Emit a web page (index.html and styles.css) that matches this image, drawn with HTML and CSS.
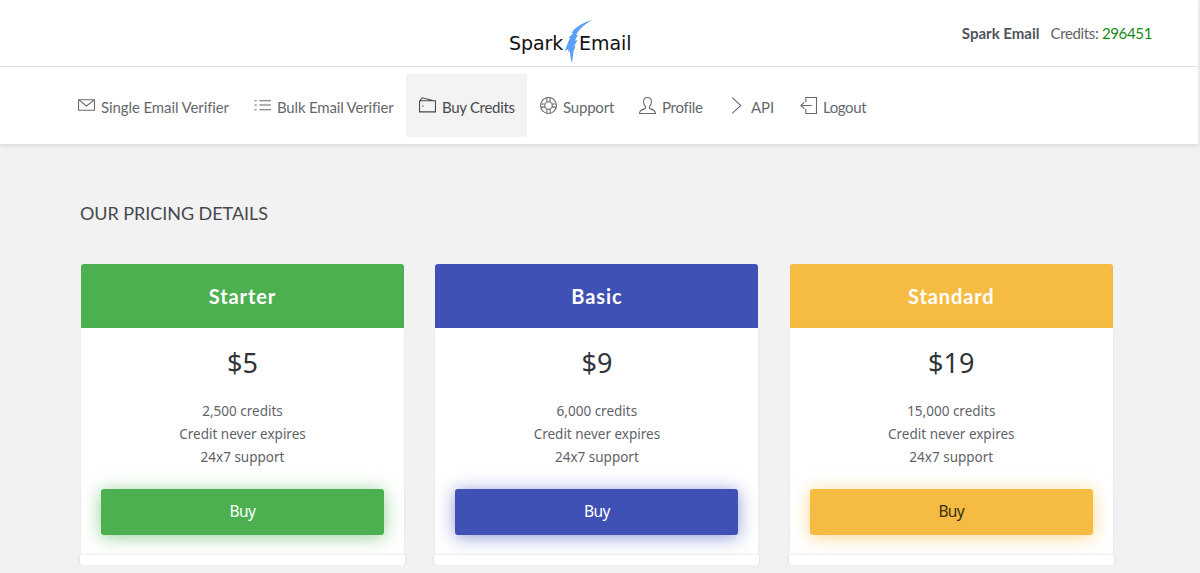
FILE: index.html
```html
<!DOCTYPE html>
<html lang="en">
<head>
<meta charset="UTF-8">
<meta name="viewport" content="width=device-width, initial-scale=1.0">
<title>Spark Email - Buy Credits</title>
<link rel="stylesheet" href="styles.css">
</head>
<body>
    <header class="header">
        <div class="topbar">
            <a class="logo" href="#">
                <span>Spark</span>
                <svg class="bolt" width="28" height="44" viewBox="0 0 28 44"><path fill="#5a9ff8" d="M28 0C19 2.500 11 7 7.500 13l2-.3L4.500 18l1.700 0C4 22 2.500 26 1 31l3.500-2-.5 3 2-1c0 5 .8 8 2 12 .8-5 1-8 1.600-12l2-5-1.600.6 3.500-6.600-2.600.4L14 15l-2 .3C15 9 21 4 28 0z"/></svg>
                <span>Email</span>
            </a>
            <div class="account">
                <b>Spark Email</b>
                <span class="credits">Credits: <span class="amount">296451</span></span>
            </div>
        </div>
        <nav class="menu">
            <a class="item single" href="#">
                <svg class="icon" viewBox="0 0 16 16"><path d="M.5 2.500h15v10H.5zM1 3l7 5.500L15 3"/></svg>
                <span>Single Email Verifier</span>
            </a>
            <a class="item bulk" href="#">
                <svg class="icon" viewBox="0 0 16 16"><path d="M5 3.500h11M5 7.500h11M5 12h11M.5 3.500h2M.5 7.500h2M.5 12h2"/></svg>
                <span>Bulk Email Verifier</span>
            </a>
            <a class="item buy active" href="#">
                <svg class="icon" viewBox="0 0 16 16"><path d="M.5 3.500h15v10.500H.5zM.5 4L3 .8 14 3.500M3 8.500h1.300"/></svg>
                <span>Buy Credits</span>
            </a>
            <a class="item support" href="#">
                <svg class="icon" viewBox="0 0 16 16"><circle cx="8" cy="8" r="7.500"/><circle cx="8" cy="8" r="3.500"/><path d="M6.500.7v4M9.500.7v4M6.500 11.300v4M9.500 11.300v4M.7 6.500h4M.7 9.500h4M11.300 6.500h4M11.300 9.500h4"/></svg>
                <span>Support</span>
            </a>
            <a class="item profile" href="#">
                <svg class="icon" viewBox="0 0 16 16"><path d="M8 .5C5.500.5 4.300 2.300 4.300 4.500c0 2 .6 3.700 1.900 4.800v1.400c-1 1-5.700.8-5.700 4.800h15c0-4-4.700-3.800-5.700-4.800V9.300c1.300-1.100 1.900-2.800 1.900-4.800C11.700 2.300 10.500.5 8 .5z"/></svg>
                <span>Profile</span>
            </a>
            <a class="item api" href="#">
                <svg class="icon" viewBox="0 0 16 16"><path d="M4 .5L12 8l-8 7.500"/></svg>
                <span>API</span>
            </a>
            <a class="item logout" href="#">
                <svg class="icon" viewBox="0 0 16 16"><path d="M5.500 5V.5h10v15h-10V11M11 8H.8M4 5L.8 8 4 11"/></svg>
                <span>Logout</span>
            </a>
        </nav>
    </header>

    <main class="content">
        <h1 class="title">OUR PRICING DETAILS</h1>
        <div class="plans">
            <div class="plan starter">
                <h2 class="plan-name">Starter</h2>
                <div class="plan-body">
                    <div class="price">$5</div>
                    <ul class="features">
                        <li>2,500 credits</li>
                        <li>Credit never expires</li>
                        <li>24x7 support</li>
                    </ul>
                    <button class="btn" type="button">Buy</button>
                </div>
                <div class="plan-footer"></div>
            </div>
            <div class="plan basic">
                <h2 class="plan-name">Basic</h2>
                <div class="plan-body">
                    <div class="price">$9</div>
                    <ul class="features">
                        <li>6,000 credits</li>
                        <li>Credit never expires</li>
                        <li>24x7 support</li>
                    </ul>
                    <button class="btn" type="button">Buy</button>
                </div>
                <div class="plan-footer"></div>
            </div>
            <div class="plan standard">
                <h2 class="plan-name">Standard</h2>
                <div class="plan-body">
                    <div class="price">$19</div>
                    <ul class="features">
                        <li>15,000 credits</li>
                        <li>Credit never expires</li>
                        <li>24x7 support</li>
                    </ul>
                    <button class="btn" type="button">Buy</button>
                </div>
                <div class="plan-footer"></div>
            </div>
        </div>
    </main>
</body>
</html>
```
FILE: styles.css
```css
* {
box-sizing: border-box;
}

body {
font-family: "Muli", "Lato", sans-serif;
font-size: 15px;
color: #5f6368;
background-color: #f2f2f2;
margin: 0;
overflow: hidden;
}

.header {
background: #ffffff;
margin-right: 2px;
box-shadow: 0 2px 4px rgba(0, 0, 0, 0.1);
}

.topbar {
display: grid;
grid-template-columns: 509px 1fr auto;
height: 67px;
padding-right: 46px;
border-bottom: 1px solid #e2e2e2;
}

.logo {
grid-column: 2;
display: flex;
align-items: flex-start;
padding-top: 20px;
font-family: "DejaVu Sans", sans-serif;
font-size: 19px;
line-height: 46px;
letter-spacing: -0.1px;
color: #111111;
text-decoration: none;
}

.bolt {
margin: 0 -13px 0 1px;
}

.account {
display: flex;
gap: 11px;
padding-top: 23px;
line-height: 20px;
}

.account b {
color: #4f555c;
}

.credits {
letter-spacing: -0.35px;
}

.amount {
color: #138a13;
}

/* Menu */
.menu {
display: flex;
height: 77px;
padding: 7px 0 7px 66px;
}

.item {
display: flex;
align-items: center;
gap: 6px;
height: 63px;
padding: 2px 0 0 12px;
color: #65696d;
letter-spacing: -0.1px;
text-decoration: none;
white-space: nowrap;
}

.active {
background: #f3f3f3;
color: #45494d;
}

.single {
width: 176px;
}

.bulk {
width: 164px;
padding-left: 12px;
letter-spacing: -0.18px;
}

.buy {
width: 121px;
padding-left: 13px;
letter-spacing: -0.3px;
}

.support {
width: 100px;
padding-left: 13px;
letter-spacing: -0.2px;
}

.profile {
width: 88px;
letter-spacing: -0.3px;
}

.api {
width: 73px;
padding-left: 13px;
}

.logout {
letter-spacing: -0.4px;
}

.icon {
width: 17px;
height: 17px;
margin-top: -3px;
fill: none;
stroke: currentColor;
stroke-width: 1;
}

/* Pricing */
.content {
padding: 57px 0 0 80px;
}

.title {
margin: 0;
font-size: 18px;
font-weight: normal;
line-height: 24px;
letter-spacing: -0.05px;
color: #45494d;
}

.plans {
display: grid;
grid-template-columns: repeat(3, 325px);
gap: 29.4px;
margin-top: 39px;
}

.plan {
text-align: center;
}

.plan-name {
margin: 0 1px;
height: 63.5px;
line-height: 64px;
border-radius: 3px 3px 0 0;
font-size: 20px;
letter-spacing: 0.9px;
color: #ffffff;
}

.plan-body {
margin: 0 1px;
height: 226.5px;
padding: 15.5px 20px 0;
background: #ffffff;
box-shadow: 0 1px 3px rgba(0, 0, 0, 0.06);
}

.price {
font-family: "Muli", "Noto Sans", sans-serif;
font-size: 27px;
line-height: 40px;
color: #2f3439;
}

.features {
list-style: none;
margin: 16.5px 0 19.5px;
padding: 0;
font-family: "Noto Sans", sans-serif;
font-size: 13.5px;
line-height: 23.4px;
}

.btn {
width: 100%;
height: 46px;
padding: 0 0 2px;
border: none;
border-radius: 3px;
font-family: "Noto Sans", sans-serif;
font-size: 15.5px;
letter-spacing: -0.6px;
color: #ffffff;
cursor: pointer;
}

.plan-footer {
height: 11px;
background: #ffffff;
border-top: 1px solid #efefef;
border-radius: 0 0 3px 3px;
box-shadow: 0 1px 3px rgba(0, 0, 0, 0.12);
}

.starter .plan-name, .starter .btn {
background: #4caf50;
}

.starter .btn {
box-shadow: 0 2px 18px rgba(76, 175, 80, 0.6);
}

.basic .plan-name, .basic .btn {
background: #3f51b5;
}

.basic .btn {
box-shadow: 0 2px 18px rgba(63, 81, 181, 0.6);
}

.standard .plan-name, .standard .btn {
background: #f6bb42;
}

.standard .btn {
color: #3b2f14;
box-shadow: 0 2px 18px rgba(246, 187, 66, 0.6);
}
```
